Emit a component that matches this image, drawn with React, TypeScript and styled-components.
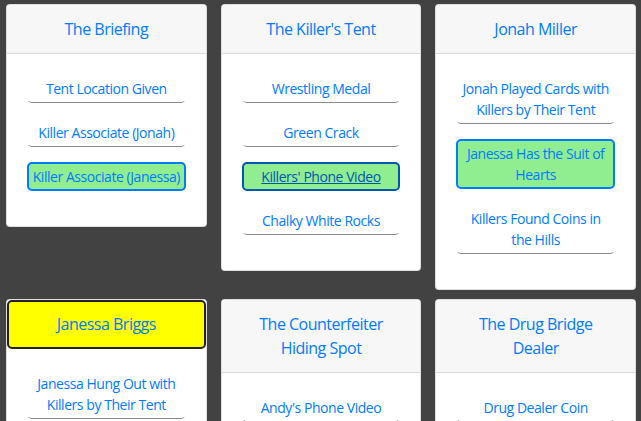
import styled, { createGlobalStyle, css } from 'styled-components';

const GlobalStyle = createGlobalStyle`
  body {
    margin: 0;
    background: #424242;
    font-family: "Open Sans", "Noto Sans", sans-serif;
  }
`;

const Board = styled.div`
  display: grid;
  grid-template-columns: repeat(3, 1fr);
  column-gap: 14px;
  row-gap: 9px;
  align-items: start;
  padding: 4px 5px 0 6px;
`;

const Card = styled.div`
  background: #ffffff;
  border: 1px solid rgba(0, 0, 0, 0.125);
  border-radius: 4px;
  overflow: hidden;
`;

const Header = styled.div<{ $current?: boolean }>`
  padding: 12px 20px;
  background: #f7f7f7;
  border-bottom: 1px solid rgba(0, 0, 0, 0.125);
  color: #007bff;
  font-size: 16px;
  line-height: 24px;
  letter-spacing: -0.5px;
  text-align: center;

  ${(p) =>
    p.$current &&
    css`
      background: #ffff00;
      border: 2px solid #222222;
      border-radius: 5px;
      padding: 10px 18px 11px;
    `}
`;

const Body = styled.div`
  padding: 20px;
`;

const Clue = styled.div<{ $found?: boolean; $hover?: boolean }>`
  margin-bottom: 15px;
  padding: 3px 4px;
  border: 1px solid transparent;
  border-bottom-color: #8a8a8a;
  border-radius: 5px;
  color: #007bff;
  font-size: 14px;
  line-height: 21px;
  letter-spacing: -0.45px;
  text-align: center;

  ${(p) =>
    p.$found &&
    css`
      padding: 2px 2px;
      background: #90ee90;
      border: 2px solid #007bff;
    `}

  ${(p) =>
    p.$hover &&
    css`
      border-color: #0056b3;
      color: #0056b3;
      text-decoration: underline;
    `}
`;

type ClueData = { text: string; found?: boolean; hover?: boolean };
type Location = { title: string; current?: boolean; clues: ClueData[] };

const locations: Location[] = [
  {
    title: 'The Briefing',
    clues: [
      { text: 'Tent Location Given' },
      { text: 'Killer Associate (Jonah)' },
      { text: 'Killer Associate (Janessa)', found: true },
    ],
  },
  {
    title: "The Killer's Tent",
    clues: [
      { text: 'Wrestling Medal' },
      { text: 'Green Crack' },
      { text: "Killers' Phone Video", found: true, hover: true },
      { text: 'Chalky White Rocks' },
    ],
  },
  {
    title: 'Jonah Miller',
    clues: [
      { text: 'Jonah Played Cards with Killers by Their Tent' },
      { text: 'Janessa Has the Suit of Hearts', found: true },
      { text: 'Killers Found Coins in the Hills' },
    ],
  },
  {
    title: 'Janessa Briggs',
    current: true,
    clues: [{ text: 'Janessa Hung Out with Killers by Their Tent' }],
  },
  {
    title: 'The Counterfeiter Hiding Spot',
    clues: [{ text: "Andy's Phone Video" }],
  },
  {
    title: 'The Drug Bridge Dealer',
    clues: [{ text: 'Drug Dealer Coin' }],
  },
];

export default function App() {
  return (
    <>
      <GlobalStyle />
      <Board>
        {locations.map((loc) => (
          <Card key={loc.title}>
            <Header $current={loc.current}>{loc.title}</Header>
            <Body>
              {loc.clues.map((c) => (
                <Clue key={c.text} $found={c.found} $hover={c.hover}>
                  {c.text}
                </Clue>
              ))}
            </Body>
          </Card>
        ))}
      </Board>
    </>
  );
}
